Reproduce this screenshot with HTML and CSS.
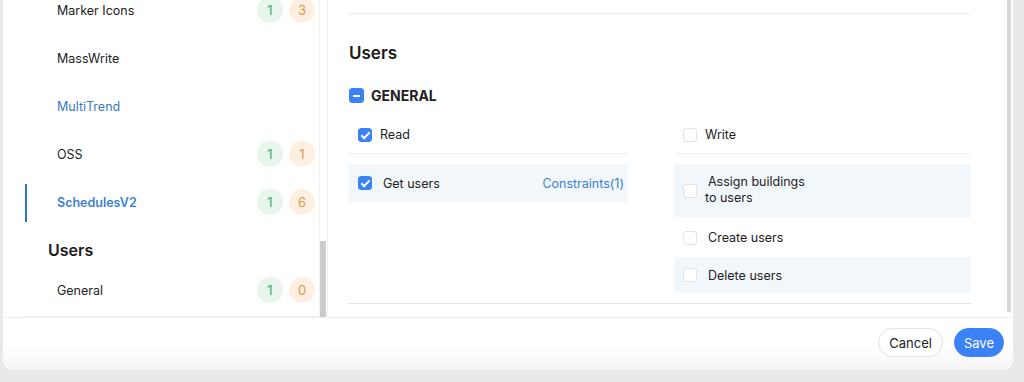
FILE: index.html
```html
<!DOCTYPE html>
<html lang="en">
<head>
  <meta charset="UTF-8" />
  <meta name="viewport" content="width=device-width, initial-scale=1.0"/>
  <title>Role permissions</title>
  <link rel="stylesheet" href="styles.css">
</head>
<body>
  <div class="modal">
    <div class="modal-body">
      <aside class="sidebar">
        <div class="side-list">
          <div class="side-item">
            <span>Marker Icons</span>
            <span class="badges"><span class="badge green">1</span><span class="badge orange">3</span></span>
          </div>
          <div class="side-item"><span>MassWrite</span></div>
          <div class="side-item link"><span>MultiTrend</span></div>
          <div class="side-item">
            <span>OSS</span>
            <span class="badges"><span class="badge green">1</span><span class="badge orange">1</span></span>
          </div>
          <div class="side-item active">
            <span>SchedulesV2</span>
            <span class="badges"><span class="badge green">1</span><span class="badge orange">6</span></span>
          </div>
          <div class="side-group">Users</div>
          <div class="side-item">
            <span>General</span>
            <span class="badges"><span class="badge green">1</span><span class="badge orange">0</span></span>
          </div>
        </div>
        <div class="side-scroll"><div class="side-thumb"></div></div>
      </aside>

      <main class="main">
        <div class="content">
          <div class="top-rule"></div>
          <h2>Users</h2>
          <div class="group-title">
            <span class="cb partial"></span>
            <span>GENERAL</span>
          </div>

          <div class="perm-grid">
            <div class="perm-col read">
              <div class="perm-head"><span class="cb on"></span><span>Read</span></div>
              <div class="perm-row shaded">
                <span class="cb on"></span>
                <span class="perm-name">Get users</span>
                <a class="constraints">Constraints(1)</a>
              </div>
            </div>
            <div class="perm-col write">
              <div class="perm-head"><span class="cb"></span><span>Write</span></div>
              <div class="perm-row shaded tall">
                <span class="cb"></span>
                <div class="perm-lines">
                  <div class="line first">Assign buildings</div>
                  <div class="line second">to users</div>
                </div>
              </div>
              <div class="perm-row">
                <span class="cb"></span>
                <span class="perm-name">Create users</span>
              </div>
              <div class="perm-row shaded last">
                <span class="cb"></span>
                <span class="perm-name">Delete users</span>
              </div>
            </div>
          </div>

          <div class="bottom-rule"></div>
        </div>
        <div class="main-scroll"></div>
      </main>
    </div>

    <footer class="modal-footer">
      <button class="btn">Cancel</button>
      <button class="btn primary">Save</button>
    </footer>
  </div>
</body>
</html>
```

FILE: styles.css
```css
body {
  margin: 0;
  background: #e9e9e9;
  font-family: 'Inter', 'Noto Sans', sans-serif;
  font-size: 12.5px;
  color: #222;
}
.modal {
  margin-left: 3px;
  width: 1010px;
  height: 370px;
  background: #fff;
  border-radius: 0 0 10px 10px;
  display: flex;
  flex-direction: column;
  overflow: hidden;
}
.modal-body {
  display: flex;
  height: 317px;
  border-bottom: 1px solid #efefef;
}

/* sidebar */
.sidebar {
  width: 324px;
  border-right: 1px solid #eee;
  display: flex;
  overflow: hidden;
}
.side-list {
  flex: 1;
  margin-left: 22px;
  margin-top: -14px;
  border-bottom: 1px solid #f0f0f0;
  height: 330px;
}
.side-item {
  height: 48px;
  padding-left: 32px;
  padding-right: 3px;
  display: flex;
  align-items: center;
  justify-content: space-between;
  position: relative;
}
.side-item.link { color: #3a78c2; }
.side-item.active {
  color: #3d7fd6;
  font-weight: 600;
}
.side-item.active::before {
  content: "";
  position: absolute;
  left: 0;
  top: 6px;
  bottom: 4px;
  width: 2px;
  background: #2f76c9;
}
.side-group {
  font-size: 16px;
  font-weight: 600;
  padding: 15px 0 0 23px;
  height: 25px;
  line-height: 18px;
  color: #1a1a1a;
}
.badges {
  display: flex;
  gap: 6px;
}
.badge {
  width: 26px;
  height: 26px;
  border-radius: 50%;
  display: flex;
  align-items: center;
  justify-content: center;
  font-size: 13px;
  font-weight: 400;
}
.badge.green { background: #e7f5ec; color: #46a866; }
.badge.orange { background: #fdf0e2; color: #dc9a48; }
.side-scroll {
  width: 6px;
  margin: 0 1px;
  display: flex;
  flex-direction: column;
  justify-content: flex-end;
  border-left: 1px solid #f1f1f1;
}
.side-thumb {
  height: 76px;
  background: #cbcbcb;
}

/* main */
.main {
  flex: 1;
  display: flex;
}
.content {
  flex: 1;
  padding: 13px 36px 0 20px;
}
.top-rule {
  border-top: 1px solid #eee;
  margin-right: 1px;
}
h2 {
  margin: 27px 0 0 1px;
  font-size: 17px;
  font-weight: 600;
  line-height: 24px;
  color: #1a1a1a;
}
.group-title {
  display: flex;
  align-items: center;
  gap: 7px;
  margin-top: 22px;
  margin-left: 1px;
  font-size: 14px;
  font-weight: 700;
  height: 16px;
}
.cb {
  width: 14px;
  height: 14px;
  border-radius: 3px;
  border: 1px solid #e2e2e2;
  box-sizing: border-box;
  background: #fff;
  flex: none;
  position: relative;
}
.cb.on, .cb.partial {
  background: #3b82f6;
  border-color: #3b82f6;
}
.cb.on::after {
  content: "";
  position: absolute;
  left: 4px;
  top: 1px;
  width: 3px;
  height: 7px;
  border: solid #fff;
  border-width: 0 2px 2px 0;
  transform: rotate(45deg);
}
.cb.partial {
  width: 15px;
  height: 15px;
}
.cb.partial::after {
  content: "";
  position: absolute;
  left: 3px;
  right: 3px;
  top: 6px;
  height: 2px;
  background: #fff;
}
.perm-grid {
  display: flex;
  gap: 46px;
  margin-top: 13px;
}
.perm-col.read { width: 280px; }
.perm-col.write { flex: 1; }
.perm-head {
  height: 37px;
  display: flex;
  align-items: center;
  gap: 8px;
  padding-left: 10px;
  border-bottom: 1px solid #eee;
  margin-bottom: 10px;
}
.write .perm-head {
  margin-left: 2px;
  padding-left: 7px;
}
.perm-row {
  height: 37px;
  display: flex;
  align-items: center;
  padding-left: 10px;
  padding-right: 4px;
  margin-bottom: 1px;
}
.read .perm-row { height: 38px; }
.perm-row.shaded { background: #f2f7fc; }
.perm-row.tall { height: 53px; margin-bottom: 2px; }
.perm-row.last { height: 36px; margin-bottom: 0; }
.perm-name { margin-left: 11px; flex: 1; }
.write .perm-row { padding-left: 9px; }
.perm-lines {
  display: flex;
  flex-direction: column;
  align-items: flex-start;
  line-height: 16px;
  margin-left: 11px;
  margin-top: -2px;
}
.line.second { margin-left: -3px; }
.constraints {
  color: #3a7fd0;
}
.bottom-rule {
  border-top: 1px solid #e2e2e2;
  margin-top: 10px;
}
.main-scroll {
  width: 4px;
  margin-right: 2px;
  height: 312px;
  background: #d9d9d9;
}

/* footer */
.modal-footer {
  flex: 1;
  display: flex;
  justify-content: flex-end;
  align-items: flex-start;
  gap: 11px;
  padding: 10px 9px 0 0;
  background: linear-gradient(#fff 55%, #f5f5f5);
}
.btn {
  font-family: inherit;
  font-size: 13px;
  height: 29px;
  padding: 0 10px;
  border-radius: 15px;
  border: 1px solid #e2e2e2;
  background: #fff;
  color: #222;
}
.btn.primary {
  background: #3b82f6;
  border-color: #3b82f6;
  color: #fff;
  padding: 0 9px;
}
```
